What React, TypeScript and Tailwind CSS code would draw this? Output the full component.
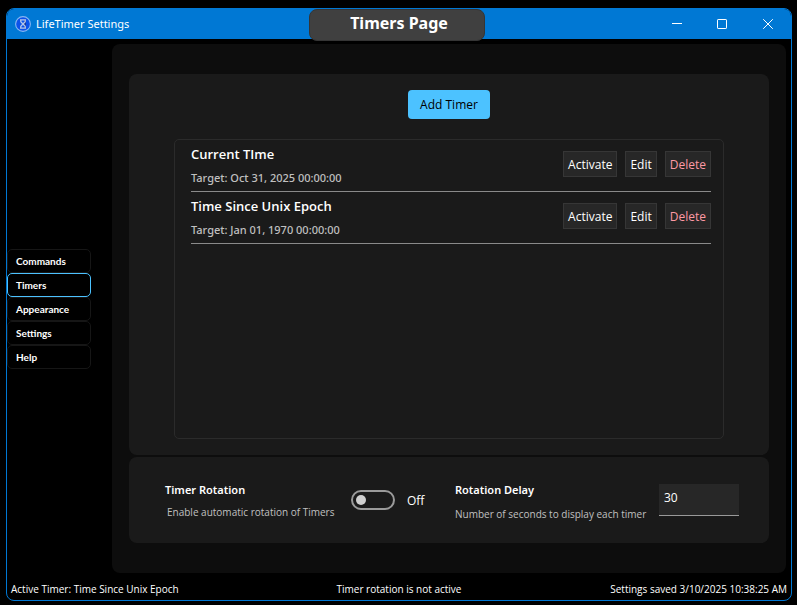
import { useState } from "react";

const pages = ["Commands", "Timers", "Appearance", "Settings", "Help"];

const timers = [
  { name: "Current TIme", target: "Oct 31, 2025 00:00:00" },
  { name: "Time Since Unix Epoch", target: "Jan 01, 1970 00:00:00" },
];

function AppIcon() {
  return (
    <svg viewBox="0 0 16 16" className="size-4 shrink-0" aria-hidden="true">
      <circle cx="8" cy="8" r="7.4" fill="#0b52ea" stroke="#86b8f2" strokeWidth="1.1" />
      <path d="M9 3.5h2v9H9z" fill="#16349a" />
      <path
        d="M5 3.8h6M5 12.2h6M5.8 4v1.8L8 8l2.2-2.2V4M5.8 12v-1.8L8 8l2.2 2.2V12"
        fill="none"
        stroke="#b5c6ea"
        strokeWidth="1.3"
      />
    </svg>
  );
}

function TitleBar() {
  return (
    <header className="relative flex h-[30px] shrink-0 items-center justify-between rounded-t-[7px] bg-[#0078d4]">
      <div className="flex items-center gap-[5px] pl-2">
        <AppIcon />
        <span className="font-['Noto_Sans','Open_Sans',sans-serif] text-[11px] leading-4">LifeTimer Settings</span>
      </div>
      <div className="absolute inset-x-0 top-0 flex justify-center pr-1">
        <h1 className="h-8 w-44 rounded-lg border border-[#353535] bg-[#404040] pl-1 text-center font-['Noto_Sans','Open_Sans',sans-serif] text-[16px] leading-[26px] font-bold">
          Timers Page
        </h1>
      </div>
      <div className="flex">
        <button aria-label="Minimize" className="flex h-[30px] w-[45px] items-center justify-center">
          <svg viewBox="0 0 10 10" className="size-[10px]" shapeRendering="crispEdges">
            <path d="M0 4.5h10" stroke="white" />
          </svg>
        </button>
        <button aria-label="Maximize" className="flex h-[30px] w-[45px] items-center justify-center">
          <svg viewBox="0 0 10 10" className="size-[10px]">
            <rect x=".5" y=".5" width="9" height="9" rx=".6" fill="none" stroke="white" />
          </svg>
        </button>
        <button aria-label="Close" className="flex h-[30px] w-[47px] items-center justify-center">
          <svg viewBox="0 0 10 10" className="size-[10px]">
            <path d="M.2.2l9.6 9.6M9.8.2L.2 9.8" stroke="white" />
          </svg>
        </button>
      </div>
    </header>
  );
}

function TimerRow({ name, target }: { name: string; target: string }) {
  const button = "h-[26px] border border-[#363636] bg-[#272727] px-1 pt-[2px] text-[12px] leading-4";
  return (
    <li className="flex h-[52px] items-start justify-between border-b border-[#8a8a8a]">
      <div className="pt-1">
        <h2 className="text-[13px] leading-5 font-semibold">{name}</h2>
        <p className="pt-1 font-['Noto_Sans','Open_Sans',sans-serif] text-[11px] leading-5 font-medium text-[#c0c0c0]">
          Target: {target}
        </p>
      </div>
      <div className="flex gap-2 pt-[11px]">
        <button className={button}>Activate</button>
        <button className={button}>Edit</button>
        <button className={`${button} text-[#ff99a4]`}>Delete</button>
      </div>
    </li>
  );
}

export default function App() {
  const [page, setPage] = useState("Timers");
  const [rotate, setRotate] = useState(false);
  return (
    <div className="flex min-h-screen bg-black pt-2 pr-[5px] pb-1 pl-[6px] font-['Open_Sans','Noto_Sans',sans-serif] text-white">
      <div className="flex flex-1 flex-col rounded-lg border border-[#0078d4] bg-black">
        <TitleBar />
        <div className="flex flex-1 pt-[5px] pr-[5px]">
          <nav className="flex w-[105px] shrink-0 flex-col justify-center pr-[21px]">
            {pages.map((p) => (
              <button
                key={p}
                onClick={() => setPage(p)}
                className={`h-6 rounded-[5px] border px-2 text-left font-[Lato,'Open_Sans',sans-serif] text-[10px] leading-4 font-bold ${
                  p === page ? "border-[#4cc2ff]" : "border-[#161616]"
                }`}
              >
                {p}
              </button>
            ))}
          </nav>
          <main className="flex flex-1 flex-col gap-[2px] rounded-lg bg-[#0d0d0d] px-[17px] py-[30px]">
            <section className="flex flex-1 flex-col items-center gap-5 rounded-lg bg-[#1a1a1a] px-[45px] py-4">
              <button className="h-[29px] rounded-[4px] bg-[#4cc2ff] px-3 text-[12px] leading-4 text-black">
                Add Timer
              </button>
              <ul className="w-full flex-1 rounded-[5px] border border-[#2b2b2b] pr-3 pl-4">
                {timers.map((t) => (
                  <TimerRow key={t.name} {...t} />
                ))}
              </ul>
            </section>
            <section className="grid h-[86px] grid-cols-[186px_104px_1fr_80px] items-center rounded-lg bg-[#1a1a1a] pr-[30px] pl-9">
              <div>
                <h2 className="font-['Noto_Sans','Open_Sans',sans-serif] text-[11px] leading-5 font-semibold">
                  Timer Rotation
                </h2>
                <p id="rotation-hint" className="pt-1 pl-[2px] text-[10px] leading-4 whitespace-nowrap text-[#c0c0c0]">
                  Enable automatic rotation of Timers
                </p>
              </div>
              <label className="flex items-center gap-3 text-[12px] leading-5">
                <input
                  type="checkbox"
                  role="switch"
                  aria-describedby="rotation-hint"
                  checked={rotate}
                  onChange={() => setRotate(!rotate)}
                  className="peer sr-only"
                />
                <span className="flex h-5 w-11 items-center rounded-full border-2 border-[#9a9a9a] px-[3px] peer-checked:justify-end">
                  <span className="size-[10px] rounded-full bg-[#cfcfcf]" />
                </span>
                <span className="pt-[2px]">{rotate ? "On" : "Off"}</span>
              </label>
              <div className="pt-1">
                <label
                  htmlFor="delay"
                  className="block font-['Noto_Sans','Open_Sans',sans-serif] text-[11px] leading-5 font-semibold"
                >
                  Rotation Delay
                </label>
                <p className="pt-1 text-[10px] leading-5 whitespace-nowrap text-[#c0c0c0]">
                  Number of seconds to display each timer
                </p>
              </div>
              <input
                id="delay"
                defaultValue="30"
                className="h-8 w-full border-b border-[#9a9a9a] bg-[#272727] px-[5px] pb-1 text-[12px] outline-none"
              />
            </section>
          </main>
        </div>
        <footer className="grid h-[27px] grid-cols-3 items-center px-1 pt-1 text-[10px] leading-4 whitespace-nowrap">
          <span>Active Timer: Time Since Unix Epoch</span>
          <span className="text-center">Timer rotation is not active</span>
          <span className="text-right">Settings saved 3/10/2025 10:38:25 AM</span>
        </footer>
      </div>
    </div>
  );
}
